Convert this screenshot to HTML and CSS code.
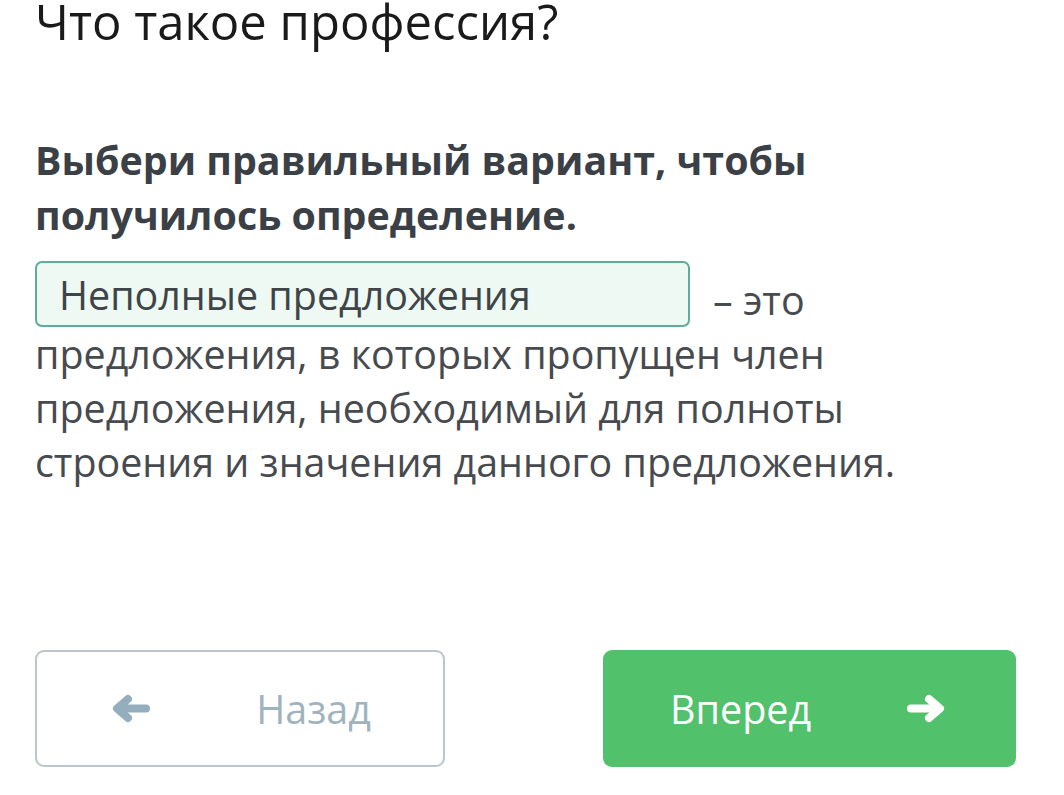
FILE: index.html
```html
<!DOCTYPE html>
<html lang="ru">
<head>
<meta charset="utf-8">
<link rel="stylesheet" href="styles.css">
</head>
<body>
<div class="page">
  <h1 class="title">Что такое профессия?</h1>
  <h2 class="task">Выбери правильный вариант, чтобы получилось определение.</h2>
  <p class="text"><span class="answer">Неполные предложения</span>– это предложения, в которых пропущен член предложения, необходимый для полноты строения и значения данного предложения.</p>
  <div class="spacer"></div>
  <div class="nav">
    <button class="btn btn-back">
      <svg class="arrow" viewBox="0 0 40 31" width="40" height="31"><path d="M35 15.5 H7 M17 6 L6 15.5 L17 25" fill="none" stroke="currentColor" stroke-width="8" stroke-linecap="round" stroke-linejoin="round"/></svg>
      <span>Назад</span>
    </button>
    <button class="btn btn-next">
      <span>Вперед</span>
      <svg class="arrow" viewBox="0 0 40 31" width="40" height="31"><path d="M5 15.5 H33 M23 6 L34 15.5 L23 25" fill="none" stroke="currentColor" stroke-width="8" stroke-linecap="round" stroke-linejoin="round"/></svg>
    </button>
  </div>
</div>
</body>
</html>
```
FILE: styles.css
```css
* { box-sizing: border-box; }
html, body { margin: 0; padding: 0; background: #fff; }
body { font-family: "Open Sans", "Noto Sans", sans-serif; }
.page {
  width: 1064px;
  height: 795px;
  display: flex;
  flex-direction: column;
  padding: 0 48px 28px 35px;
  overflow: hidden;
}
.title {
  margin: 0;
  font-weight: 400;
  font-size: 49px;
  line-height: 42px;
  color: #1a1a1a;
}
.task {
  max-width: 940px;
  margin: 91px 0 0 0;
  font-size: 39.4px;
  font-weight: 700;
  line-height: 55px;
  color: #3b3f46;
}
.text {
  max-width: 940px;
  margin: 18px 0 0 0;
  font-size: 39.4px;
  line-height: 54px;
  color: #474a4e;
}
.answer {
  display: inline-block;
  width: 655px;
  height: 66px;
  margin-right: 23px;
  padding: 5px 22px 0;
  border: 2px solid #5fac9a;
  border-radius: 7px;
  background: #edf9f2;
  color: #3e4448;
  line-height: 54px;
  vertical-align: 5px;
}
.spacer { flex: 1; }
.nav {
  display: flex;
  justify-content: space-between;
}
.btn {
  height: 117px;
  display: flex;
  align-items: center;
  justify-content: space-between;
  padding: 0 72px 0 74px;
  border-radius: 9px;
  font-family: inherit;
  font-size: 39.5px;
  cursor: pointer;
}
.btn-back {
  width: 410px;
  background: #fff;
  border: 2px solid #bac6cc;
  color: #9fb3bf;
}
.btn-back .arrow { color: #95aebd; }
.btn-next {
  width: 413px;
  background: #52c16b;
  border: none;
  color: #fff;
  padding: 0 70px 0 67px;
}
.arrow { display: block; flex: none; }
```
